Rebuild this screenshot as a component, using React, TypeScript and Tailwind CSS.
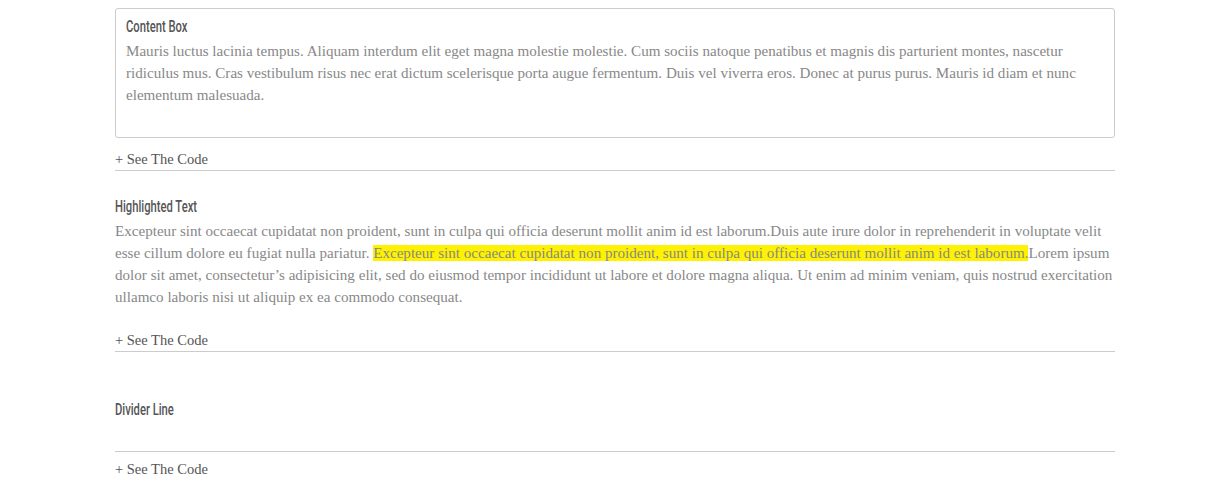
const heading = "origin-left scale-x-[0.66] w-fit text-[17px] font-medium leading-5 text-[#555] [font-family:Roboto,'Liberation_Sans',sans-serif]";
const serif = "[font-family:'Liberation_Serif','DejaVu_Serif',serif]";
const body = `text-[15.1px] leading-[22px] text-[#888] ${serif}`;

function SeeCode() {
  return (
    <div className={`pt-[11px] pb-[1px] text-[14.5px] leading-5 text-[#555] border-b border-[#ccc] ${serif}`}>
      <a>+ See The Code</a>
    </div>
  );
}

export default function App() {
  return (
    <div className="min-h-[504px] bg-white">
      <div className="w-[1000px] ml-[115px] pt-2">
        <section>
          <div className="border border-[#ccc] rounded-[3px] px-[10px] pt-[7px] pb-[31px]">
            <h3 className={heading}>Content Box</h3>
            <p className={`${body} mt-[4px]`}>
              Mauris luctus lacinia tempus. Aliquam interdum elit eget magna molestie molestie. Cum sociis natoque penatibus et magnis dis parturient montes, nascetur ridiculus mus. Cras vestibulum risus nec erat dictum scelerisque porta augue fermentum. Duis vel viverra eros. Donec at purus purus. Mauris id diam et nunc elementum malesuada.
            </p>
          </div>
          <SeeCode />
        </section>

        <section className="mt-[25px]">
          <h3 className={heading}>Highlighted Text</h3>
          <p className={`${body} mt-[4px]`}>
            Excepteur sint occaecat cupidatat non proident, sunt in culpa qui officia deserunt mollit anim id est laborum.Duis aute irure dolor in reprehenderit in voluptate velit esse cillum dolore eu fugiat nulla pariatur.{" "}
            <span className="bg-[#fff200]">Excepteur sint occaecat cupidatat non proident, sunt in culpa qui officia deserunt mollit anim id est laborum.</span>
            Lorem ipsum dolor sit amet, consectetur’s adipisicing elit, sed do eiusmod tempor incididunt ut labore et dolore magna aliqua. Ut enim ad minim veniam, quis nostrud exercitation ullamco laboris nisi ut aliquip ex ea commodo consequat.
          </p>
          <div className="mt-[11px]">
            <SeeCode />
          </div>
        </section>

        <section className="mt-[47px]">
          <h3 className={heading}>Divider Line</h3>
          <hr className="mt-[32px] border-0 border-t border-[#ccc]" />
          <div className={`pt-[7px] text-[14.5px] leading-5 text-[#555] ${serif}`}>
            <span>+ See The Code</span>
          </div>
        </section>
      </div>
    </div>
  );
}
